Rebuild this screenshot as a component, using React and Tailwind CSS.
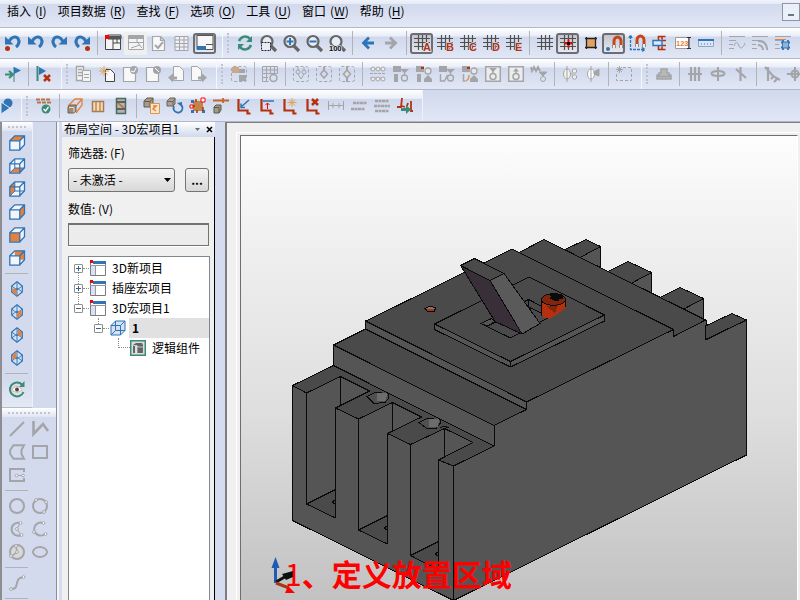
import clsx from "clsx";

const BLUE = "#2f74b5";
const RED = "#b5310e";
const GRAY = "#a3a5a8";
const DARK = "#4f4f4f";
const TEAL = "#3c8a78";
const ORANGE = "#e5813c";

function Glyph({ children }) {
  return (
    <svg className="h-4 w-4 overflow-visible" viewBox="0 0 16 16" fill="none" aria-hidden="true">
      {children}
    </svg>
  );
}

const undoArrow = (
  <g>
    <path d="M4 6.500C6.500 1.500 11 .8 13 3.500C14.800 6.500 14 9.500 11 12" stroke={BLUE} strokeWidth="3" />
    <path d="M0 1.500V9.500H8.500z" fill={BLUE} />
  </g>
);
const grid = (c) => <path d="M4.500 0v15M8.500 0v15M12.500 0v15M0 3.500h16M0 7.500h16M0 11.500h16" stroke={c} strokeWidth="1.200" />;
const page = (c) => <path d="M1.500 1.500h8l4 4v10h-12zM9.500 1.500v4h4" fill="#f8f8f8" stroke={c} strokeWidth="1.200" />;
const lens = (
  <g>
    <circle cx="7" cy="6.500" r="5.500" stroke="#666" strokeWidth="2.200" fill="#e8ecf6" />
    <path d="M11 11l5 5" stroke="#666" strokeWidth="3.200" />
  </g>
);
const magnet = (
  <g>
    <path d="M5 10V6a3.500 4 0 0 1 7 0v4" stroke="#c4481c" strokeWidth="3" />
    <path d="M5 10v3M12 10v3" stroke="#eee" strokeWidth="3" />
    <path d="M3.500 10v3M6.500 10v3M10.500 10v3M13.500 10v3" stroke="#777" strokeWidth="0.800" />
  </g>
);
const cubeWire = <path d="M.8 5.800h10v9.400h-10zM.8 5.800L5.800.8h9.700v9l-4.700 5M10.800 5.800l4.700-5" stroke={BLUE} strokeWidth="1.300" />;
const cubeInner = <path d="M5.800 1v9L1 14.800M5.800 10h9.500" stroke={BLUE} strokeWidth="1" />;
const diamond = (
  <g>
    <path d="M8 .8L13.300 5v6L8 15.300 2.700 11V5z" fill="#d5e0f3" stroke={BLUE} strokeWidth="1.200" />
    <path d="M8 1v14M2.700 5L8 9l5.300-4M2.700 11L8 7l5.300 4" stroke={BLUE} strokeWidth="0.900" />
  </g>
);
const dashedBox = <rect x="0.500" y="0.500" width="15" height="15" rx="2" stroke={GRAY} strokeDasharray="3 2" />;
const angle = <path d="M2.500 1v11.500h9v3h3" stroke={RED} strokeWidth="2.200" />;
const grayFilter = (
  <g fill={GRAY}>
    <path d="M0 0h8v6H0zM7 3h9l-4 4v2h-1V7z" />
    <circle cx="11.500" cy="12" r="3" fill="none" stroke={GRAY} strokeWidth="1.300" />
    <path d="M1 8h4v8H1z" />
  </g>
);
const graySwap = (
  <g fill={GRAY}>
    <path d="M0 0h8v6H0z" />
    <path d="M5 1h3v2H5z" fill={RED} />
    <circle cx="12" cy="5" r="3" fill="#e8e8e8" stroke={GRAY} strokeWidth="1.300" />
    <path d="M12 9l4 4v3H8v-3zM1 8h4v8H1z" />
  </g>
);
const waves = <path d="M0 1.500h16M0 5.500h7M0 9.500h4M0 13.500h5" stroke={GRAY} />;
const textMark = (t) => (
  <g>
    {grid(DARK)}
    <text x="9" y="16" fontSize="11" fontWeight="700" fontFamily="Liberation Sans" fill={RED} stroke="#dfe4f2" strokeWidth="1.500" paintOrder="stroke">{t}</text>
  </g>
);

const icons = {
  undoList: <g>{undoArrow}<circle cx="2.500" cy="13.500" r="2.500" fill={RED} /></g>,
  undo: undoArrow,
  redo: <g transform="matrix(-1 0 0 1 16 0)">{undoArrow}</g>,
  redoList: <g><g transform="matrix(-1 0 0 1 16 0)">{undoArrow}</g><circle cx="13.500" cy="13.500" r="2.500" fill={RED} /></g>,
  navigator: <g><path d="M.5 1.500h15v13H.5z" fill="#f4f4f4" stroke="#444" /><path d="M3 0h13v4H3zM8 4v4h8M8 8v7M12 4v4" stroke="#444" /><path d="M4 1h12v3H4z" fill="#555" /><path d="M0 0h4v4H0z" fill="red" /></g>,
  window: <g stroke={GRAY}><path d="M.5.500h15v14H.5z" fill="#f4f4f4" /><path d="M0 2.500h16" strokeWidth="3" /><path d="M1 7.500h14M9 4v4M3 13l9-3M10 8l4 5" /></g>,
  pageCheck: <g>{page(GRAY)}<path d="M4 10l3 3 5-6" stroke={GRAY} strokeWidth="2" /></g>,
  table: <path d="M1 1.500h13v14H1zM1 5h13M1 8.500h13M1 12h13M5.500 1v14M10 1v14" fill="#eef0f6" stroke={GRAY} />,
  preview: <g><path d="M0 .5h16v14H0z" fill="#f7f7f7" stroke="#555" /><path d="M0 11h9v4H0z" fill={BLUE} /><path d="M9 9.500h7" stroke="#555" /></g>,
  refresh: <g stroke={TEAL} strokeWidth="2.500"><path d="M2 6C4 1 10 0 13 4M14 10C12 15 6 16 3 12" /><path d="M15 1v6h-6zM1 15V9h6z" fill={TEAL} stroke="none" /></g>,
  zoomArea: <g>{lens}<path d="M1.500 7.500h9v8h-9z" stroke="#222" strokeDasharray="2 1" fill="#e8ecf6" /></g>,
  zoomIn: <g>{lens}<path d="M3.500 6.500h7M7 3v7" stroke={BLUE} strokeWidth="2" /></g>,
  zoomOut: <g>{lens}<path d="M3.500 6.500h7" stroke={BLUE} strokeWidth="2" /></g>,
  zoomFull: <g>{lens}<text x="0" y="16" fontSize="7.500" fontWeight="700" fontFamily="Liberation Sans" fill="#111" stroke="#e3e8f5" strokeWidth="1.500" paintOrder="stroke">100</text></g>,
  back: <path d="M14 8H4M9 2.500L3.500 8 9 13.500" stroke={BLUE} strokeWidth="2.800" />,
  forward: <path d="M2 8h10M7 2.500L12.500 8 7 13.500" stroke={GRAY} strokeWidth="2.800" />,
  gridA: textMark("A"),
  gridB: textMark("B"),
  gridC: textMark("C"),
  gridD: textMark("D"),
  gridE: textMark("E"),
  grid: grid(DARK),
  gridSnap: <g>{grid(DARK)}<path d="M8.500 4.500v8M4.500 8.500h8" stroke="red" strokeWidth="2" /><path d="M7 7h3v3H7z" fill="#111" /></g>,
  fill: <g><path d="M4 4h8v8H4z" fill="#e3a262" /><path d="M3.500 2v12M12.500 2v12M2 3.500h12M2 12.500h12" stroke="#222" strokeWidth="1.300" /></g>,
  magnet: <g><g transform="translate(3 0)">{magnet}</g><circle cx="2" cy="14" r="2" fill={BLUE} /></g>,
  magnetAxis: <g><g transform="translate(3 -1)">{magnet}</g><path d="M1.500 1v13.500H16M0 3l1.500-3 1.500 3M13 12.500l3 2-3 2" stroke={BLUE} strokeWidth="1.300" strokeDasharray="3 1" /></g>,
  component: <g><path d="M13.500 1.500H6.500v13h7M10 4.500V1M10 11.500v3M10 5.500h4M10 10.500h4" stroke={RED} strokeWidth="1.600" /><path d="M1 5.500h9v5H1z" fill="#dde8f8" stroke={BLUE} strokeWidth="1.400" /></g>,
  number: <g><path d="M.5 2.500h13v11H.5z" fill="#fff" stroke="#999" /><text x="1" y="11" fontSize="7.500" fontWeight="700" fontFamily="Liberation Sans" fill={ORANGE}>123</text><path d="M12 2.500h4M14 2.500v11M12 13.500h4" stroke="#333" /></g>,
  ruler: <g><path d="M.5 4.500h15v7H.5z" fill="#dce6f6" stroke="#8fa6c4" /><path d="M0 5h16" stroke={BLUE} strokeWidth="2" /><path d="M3 9h11" stroke={BLUE} strokeDasharray="1 2" /></g>,
  waveA: <g>{waves}<path d="M5 11c2-6 4-3 5 0s4 3 6-3" stroke={GRAY} /></g>,
  waveB: <g>{waves}<path d="M6 6a8 8 0 0 1 9 9M6 10a5 5 0 0 1 5 5" stroke={GRAY} strokeWidth="2" /></g>,
  waveC: <g>{waves}<path d="M0 4.500h11" stroke={ORANGE} /><path d="M6 7.500h9M6 12.500h9M8 5v10M13 5v10" stroke={BLUE} strokeWidth="1.800" /><path d="M8 7.500h5v5H8z" fill="#8fb4dc" /></g>,

  insertFlag: <g><path d="M0 8.500h8M4 5l4 3.500L4 12" stroke={TEAL} strokeWidth="2.200" /><path d="M9 1v15" stroke={TEAL} /><path d="M9 1l7 3.500L9 8z" fill={BLUE} /></g>,
  deleteFlag: <g><path d="M1.500 0v15" stroke={TEAL} strokeWidth="2" /><path d="M3 1l7 4-7 4z" fill={BLUE} /><path d="M8 9l6 6M14 9l-6 6" stroke={RED} strokeWidth="2.500" /></g>,
  pages: <g stroke={GRAY} fill="#f4f4f4"><path d="M.5.500h7v14h-7zM2 3.500h4M2 6.500h4M2 9.500h4" strokeWidth="1.400" /><path d="M6.500 4.500h8v11h-8zM8 8.500h5M8 11.500h5" /></g>,
  newPage: <g><path d="M6.500 3.500h5l4 4v8h-9z" fill="#f8f8f8" stroke="#444" /><path d="M5 0v10M0 5h10M1.500 1.500l7 7M8.500 1.500l-7 7" stroke="#e2a25a" /></g>,
  pageIn: <g>{page(GRAY)}<circle cx="12" cy="4" r="4" fill={GRAY} /><path d="M9 5l3 1 2-4" stroke="#fff" /></g>,
  pageOut: <g>{page(GRAY)}<circle cx="12" cy="4" r="4" fill={GRAY} /><path d="M10 2l4 4" stroke="#fff" /></g>,
  pagePrev: <g><path d="M5.500.500h6l4 4v10h-10z" fill="#f8f8f8" stroke={GRAY} /><path d="M0 11.500l5-4v3h4v3H5v3z" fill={GRAY} /></g>,
  pageNext: <g><path d="M.5.500h6l4 4v10h-10z" fill="#f8f8f8" stroke={GRAY} /><path d="M16 11.500l-5-4v3H7v3h4v3z" fill={GRAY} /></g>,
  macroBox: <g>{dashedBox}<path d="M1 1h7v6H1z" fill="#c9a987" /><path d="M8 3h6v4H8zM8 9h7v6H8z" fill={GRAY} /></g>,
  macroGrid: <g stroke={GRAY}><path d="M.5.500h15v7H.5zM.5 8v7.500h6M4.500 0v16M8.500 0v8M12.500 0v8M0 4h16M0 11.500h6" /><circle cx="11.500" cy="12" r="3.500" strokeWidth="1.500" /></g>,
  deviceA: <g>{dashedBox}<circle cx="5" cy="6" r="2" stroke={GRAY} /><circle cx="11" cy="6" r="2" stroke={GRAY} /><path d="M5 1v3M11 1v3M5 8l3 5 3-5" stroke={GRAY} /></g>,
  deviceB: <g>{dashedBox}<path d="M8 1v3" stroke={GRAY} strokeWidth="2" /><path d="M8 4l3.500 4L8 12 4.500 8z" stroke={GRAY} strokeWidth="1.500" /></g>,
  deviceC: <g>{dashedBox}<path d="M8 0v16" stroke={GRAY} strokeWidth="2" /><path d="M8 4l3.500 4L8 12 4.500 8z" fill="#ddd" stroke={GRAY} strokeWidth="1.500" /></g>,
  chain: (
    <g stroke={GRAY}>
      <path d="M0 3h16M0 7.500h16M0 12h16" strokeDasharray="3 1" />
      {[3, 8, 13].map((x) => (
        <g key={x} fill="#eee">
          <circle cx={x} cy="3" r="2" />
          <circle cx={x} cy="13" r="2" />
        </g>
      ))}
    </g>
  ),
  filterA: grayFilter,
  swapA: graySwap,
  filterB: <g>{grayFilter}<path d="M0 7h6v9H0z" fill="#dde2f0" /><path d="M1.500 8v7h4l3-6" stroke={GRAY} strokeWidth="1.500" /></g>,
  swapB: <g>{graySwap}<path d="M0 7h7v9H0z" fill="#dde2f0" /><path d="M1.500 8v7h2" stroke={GRAY} strokeWidth="1.500" /><path d="M4 15c2-1 3-3 3-6" stroke="#dc9a62" strokeWidth="1.500" /></g>,
  boxDown: <g stroke={GRAY} strokeWidth="1.500"><path d="M.7.700h14.600v14.600H.7z" fill="#ececec" /><circle cx="8" cy="10.500" r="3" /><path d="M4 2h8L8 6z" fill={GRAY} stroke="none" /><path d="M8 4v4" /></g>,
  boxUp: <g stroke={GRAY} strokeWidth="1.500"><path d="M.7.700h14.600v14.600H.7z" fill="#ececec" /><circle cx="8" cy="10.500" r="3" /><path d="M5 5.500h6L8 2z" fill={GRAY} stroke="none" /><path d="M8 4v4" /></g>,
  spring: <g stroke={GRAY}><path d="M0 1l1 4 2-4 2 4 2-4 2 4" strokeWidth="1.800" /><path d="M8 6h8l-4 4z" fill={GRAY} /><circle cx="12" cy="13" r="2.500" /></g>,
  plugA: <g stroke={GRAY}><ellipse cx="5" cy="8" rx="3.500" ry="5" fill="#f4f2ea" /><path d="M5 0v16M8 8h3" /><circle cx="12.500" cy="5" r="2.200" fill="#eee" /><circle cx="12.500" cy="11" r="2.200" fill="#eee" /></g>,
  plugB: <g stroke={GRAY}><ellipse cx="6" cy="8" rx="3.500" ry="5" fill="#fff" /><path d="M6 0v16" /><path d="M9 6l5-3v7L9 8z" fill={GRAY} /></g>,
  boxStar: <g stroke={GRAY}><path d="M7 1.500h8.500v13H.5V8" strokeDasharray="3 2" /><path d="M3.500 0v7M0 3.500h7M1 1l5 5M6 1L1 6" /></g>,
  base: <path d="M5 3h6v4h2v2h2v4H1V9h2V7h2zM1 10.500h14" fill="#b8b8b8" stroke={GRAY} strokeWidth="1.500" />,
  bars: <path d="M4 1v14M8 1v14M12 1v14M1 8h14" stroke={GRAY} strokeWidth="2.200" />,
  node: <g stroke={GRAY} strokeWidth="2"><path d="M8 1v14" /><ellipse cx="8" cy="7.500" rx="6.500" ry="2.500" /></g>,
  slash: <path d="M7.500 1v14M3 3l10 9" stroke={GRAY} strokeWidth="2.200" />,
  tee: <path d="M4 1v14M1 1l8 9 7 4M7 13l3-3M10 16l3-3" stroke={GRAY} strokeWidth="2.200" />,
  target: <g stroke={GRAY} strokeWidth="2"><circle cx="8" cy="8" r="3.500" /><path d="M8 1v14M0 8h16" /></g>,

  globe: <g><circle cx="12" cy="5" r="4.500" fill={BLUE} /><path d="M5 4v12l9-6z" fill={BLUE} stroke="#e0e6f3" /></g>,
  rackCheck: <g><path d="M0 1.500h15M1 4.500h14" stroke="#b5744c" strokeWidth="2" strokeDasharray="4 1" /><circle cx="10" cy="11" r="4.500" fill={TEAL} /><path d="M7.500 11l2 2 3-4" stroke="#fff" strokeWidth="1.300" /></g>,
  cubeOrange: <g><path d="M1 8l7-7h7v6l-6 8M15 1L9 8" stroke={ORANGE} strokeWidth="1.300" /><path d="M1 9l2-2h6v6l-2 2H1z" fill="#a08b74" stroke="#6c6255" /><path d="M2 9.500h5v5" stroke="#ddd" /></g>,
  rail: <g><path d="M2.500 3.500h11v10h-11z" fill="#f2dfae" stroke="#aa785c" strokeWidth="1.500" /><path d="M6 4v9M10 4v9" stroke="#c0885b" strokeWidth="1.500" /></g>,
  cabinet: <g><path d="M3.500.500h9v15h-9z" fill="#b0b5b0" stroke="#4a6a60" strokeWidth="1.500" /><path d="M4 4h8M4 11h8" stroke="#444" strokeWidth="1.500" /><path d="M5 5l6 5" stroke="#e05a24" strokeWidth="1.500" /></g>,
  copyCube: <g><path d="M0 3l3-3h6v6L6 9H0z" fill="#a79b8a" stroke="#62594c" /><path d="M.5 3.500H6V9M6 3.500L9 .5" stroke="#62594c" /><path d="M6.500 5.500h9v10h-9z" fill="#f7e7cf" stroke="#dd964f" /><path d="M9 8h3l-3 3 3 2" stroke={ORANGE} strokeWidth="1.500" /></g>,
  rotateCube: <g><path d="M0 3l3-3h5v6L6 8H0z" fill="#aaa396" stroke="#6a6358" /><path d="M.5 3.500H6V8M6 3.500L8 .5" stroke="#6a6358" /><path d="M7 8a4.500 4.500 0 1 0 6-2" stroke={BLUE} strokeWidth="1.800" /><path d="M10 5l5-1v5z" fill={BLUE} /></g>,
  scatter: <g><path d="M3 3h10v10H3z" fill="#c18449" /><path d="M1 2h3v3H1zM1 12h3v3H1zM12 12h3v3h-3z" fill={BLUE} /><path d="M1 8h4M6 1v3M13 9v4M7 12v3" stroke={RED} strokeWidth="1.500" /><path d="M11 0h4v4h-4zM0 7h3v3H0z" fill="#fff" stroke="red" /></g>,
  moveCube: <g><path d="M0 2.500h16M10 0v5" stroke="#c9652b" strokeWidth="1.800" /><path d="M1 9l2-2h5v5l-2 3H1z" fill="#a09b86" stroke="#5c5b4c" /><path d="M1 9.500h5V15" stroke="#5c5b4c" /></g>,
  angleA: <g>{angle}<path d="M5 9l8-7M9 9.500H5v-4" stroke={BLUE} strokeWidth="1.500" /></g>,
  angleB: <g>{angle}<path d="M4 3h11" stroke={BLUE} strokeWidth="1.500" /><path d="M8.500 5v6M6.500 7l2-2 2 2" stroke="red" /></g>,
  angleStar: <g>{angle}<path d="M10 0v9M5.500 4.500h9M7 1.500l6 6M13 1.500l-6 6" stroke="#e3a05b" /></g>,
  angleX: <g>{angle}<path d="M7 1l6 6M13 1L7 7" stroke={RED} strokeWidth="2.500" /></g>,
  measure: <path d="M.5 3v9M15.500 3v9M1 7.500h14M5 5v5M11 5v5" stroke={GRAY} />,
  linesA: <path d="M2 5h14M0 11h14" stroke={GRAY} strokeWidth="2.500" strokeDasharray="3 .5" />,
  linesB: <path d="M1 3h14M0 8h16M1 13h14" stroke={GRAY} strokeWidth="2.300" strokeDasharray="3 .5" />,
  route: <g><path d="M5 0L4 9H0M5 8l3 1M14 3v10h2M11 5l-1 3" stroke={RED} strokeWidth="1.800" /><path d="M4 10h5V7l5 4.500L9 16v-3H4z" fill={TEAL} /></g>,

  cubeTop: <g><path d="M1 5.800h10v9H1zM11 5.800l4.500-5v9l-4.700 5" fill="#f2f5fb" /><path d="M1 5.800L5.800.8h9.700l-5 5z" fill={ORANGE} />{cubeWire}</g>,
  cubeBottom: <g><path d="M1 5.800L5.800.8h9.700v9l-5 5H1z" fill="#f2f5fb" /><path d="M1 14.800L5.800 10h9.700l-5 4.800z" fill={ORANGE} />{cubeWire}{cubeInner}</g>,
  cubeLeft: <g><path d="M1 5.800L5.800.8h9.700v9l-5 5H1z" fill="#f2f5fb" /><path d="M1 5.800l4.800-5V10L1 14.800z" fill={ORANGE} />{cubeWire}{cubeInner}</g>,
  cubeRight: <g><path d="M1 5.800L5.800.8h9.700l-5 5v9H1z" fill="#f2f5fb" /><path d="M10.800 5.800l4.700-5v9l-4.700 5z" fill={ORANGE} />{cubeWire}</g>,
  cubeFront: <g><path d="M1 5.800L5.800.8h9.700v9l-5 5z" fill="#f2f5fb" /><path d="M1 5.800h10v9H1z" fill={ORANGE} />{cubeWire}</g>,
  cubeBack: <g><path d="M1 5.800L5.800.8h9.700v9l-5 5H1z" fill="#f2f5fb" /><path d="M5.800.8h9.700v9h-4.700v-4h-5z" fill={ORANGE} />{cubeWire}</g>,
  isoSW: <g>{diamond}<path d="M3.300 7L8 9.500v5l-4.700-3.800z" fill={ORANGE} /></g>,
  isoSE: <g>{diamond}<path d="M12.700 6L8 9.500v5l4.700-3.800z" fill={ORANGE} /></g>,
  isoNE: <g>{diamond}<path d="M8.500 2l4.200 3.500V10L8.500 7z" fill={ORANGE} /></g>,
  isoNW: <g>{diamond}<path d="M7.500 2L3.300 5.500V10l4.200-3z" fill={ORANGE} /></g>,
  orbit: <g><path d="M13 3.500A7 7 0 1 0 14.500 11" stroke={TEAL} strokeWidth="2" /><path d="M15.500 0v6H10z" fill={TEAL} /><path d="M3 8.500c3-4 7-4 10 0-3 3.500-7 3.500-10 0z" fill="#fff" stroke="#dba867" /><circle cx="8" cy="8.500" r="2" fill="#36495f" /></g>,

  line: <path d="M1 15L15 1" stroke={GRAY} strokeWidth="2.200" />,
  polyline: <path d="M1.500 0v13L11 3l5 7" stroke={GRAY} strokeWidth="2.600" />,
  polygon: <path d="M4.500 1.200H15L12.500 6v4l2.500 4.800H4.500L1.200 10V6z" stroke={GRAY} strokeWidth="2" />,
  rect: <path d="M1 2h14v12H1z" stroke={GRAY} strokeWidth="2" />,
  rectCenter: <g stroke={GRAY}><path d="M15 5V2H1v12h14v-3" strokeWidth="2" /><path d="M8 8.500h6" /><circle cx="7.500" cy="8.500" r="1.300" fill="#fff" /><circle cx="14" cy="8.500" r="1.300" fill="#fff" /></g>,
  circle: <circle cx="8" cy="8" r="7" stroke={GRAY} strokeWidth="2" />,
  circle3: <g stroke={GRAY}><circle cx="8" cy="8" r="7" strokeWidth="2" /><circle cx="4" cy="2" r="1.400" fill="#fff" /><circle cx="14" cy="4" r="1.400" fill="#fff" /><circle cx="12" cy="14" r="1.400" fill="#fff" /></g>,
  arcCenter: <g stroke={GRAY}><path d="M11 2a6.500 6.500 0 1 0 1 12" strokeWidth="2" /><path d="M11 2L8 8l4 6" /><circle cx="11.500" cy="2" r="1.400" fill="#fff" /><circle cx="8" cy="8" r="1.400" fill="#fff" /><circle cx="12.500" cy="14" r="1.400" fill="#fff" /></g>,
  arc: <g stroke={GRAY}><path d="M11 2a6.500 6.500 0 1 0 2 11" strokeWidth="2" /><circle cx="11.500" cy="2" r="1.400" fill="#fff" /><circle cx="2" cy="11" r="1.400" fill="#fff" /><circle cx="13.500" cy="13" r="1.400" fill="#fff" /></g>,
  sector: <g stroke={GRAY}><circle cx="8" cy="8" r="7" strokeWidth="2" fill="#d9d9d9" /><path d="M7 2l1 6-5 4" strokeWidth="1.600" /><circle cx="7" cy="2" r="1.400" fill="#fff" /><circle cx="8" cy="8" r="1.400" fill="#fff" /><circle cx="2" cy="12" r="1.400" fill="#fff" /></g>,
  ellipse: <ellipse cx="8" cy="8" rx="7" ry="5" stroke={GRAY} strokeWidth="2" />,
  spline: <g stroke={GRAY}><path d="M2 14c6 0 5-3 6-6s1-5 6-6" strokeWidth="2" /><circle cx="14.500" cy="2" r="1.400" fill="#fff" /><circle cx="2" cy="14" r="1.400" fill="#fff" /></g>,
};

const menus = [
  ["插入", "I"],
  ["项目数据", "R"],
  ["查找", "F"],
  ["选项", "O"],
  ["工具", "U"],
  ["窗口", "W"],
  ["帮助", "H"],
];

// "|" is a separator, ":" starts a new toolbar with its own grip
const rowOne = "undoList undo redo redoList | navigator window pageCheck table preview : refresh zoomArea zoomIn zoomOut zoomFull | back forward | gridA gridB gridC gridD gridE | grid gridSnap fill magnet magnetAxis component number ruler | waveA waveB waveC".split(" ");
const rowTwo = "insertFlag | deleteFlag : pages newPage pageIn pageOut pagePrev pageNext : macroBox | macroGrid | deviceA deviceB deviceC | chain filterA swapA filterB swapB boxDown boxUp spring | plugA plugB | boxStar : base | bars node slash | tee target".split(" ");
const rowThree = "globe : rackCheck | cubeOrange rail cabinet | copyCube rotateCube scatter moveCube angleA angleB angleStar angleX measure linesA linesB route".split(" ");
const viewTools = "cubeTop cubeBottom cubeLeft cubeRight cubeFront cubeBack | isoSW isoSE isoNE isoNW | orbit".split(" ");
const drawTools = [
  ["line", "polyline", "polygon", "rect", "rectCenter"],
  ["circle", "circle3", "arcCenter", "arc", "sector", "ellipse"],
  ["spline"],
];
const pressed = ["preview", "gridA", "gridSnap", "magnet"];

function ToolButton({ name }) {
  const on = pressed.includes(name);
  return (
    <button
      type="button"
      aria-label={name}
      aria-pressed={on}
      className={clsx(
        "grid w-[23px] shrink-0 place-items-center",
        on ? "h-[21px] rounded-[3px] border-2 border-[#6b6d73] bg-gradient-to-b from-[#c3c6cf] to-[#e6e9f2]" : "h-[23px]",
        name === "window" && "bg-[#efeff0]"
      )}
    >
      <Glyph>{icons[name]}</Glyph>
    </button>
  );
}

function Toolbar({ items, className }) {
  return (
    <div
      role="toolbar"
      className={clsx(
        "flex h-[31px] shrink-0 items-center overflow-hidden border-[#b2b8ca] bg-[linear-gradient(#ffffff,#e9edf7_27%,#d0d8ec_30%,#e1e7f5)]",
        className
      )}
    >
      {items.map((item, i) => {
        if (item === "|") {
          return <span key={i} className="flex h-6 w-2 shrink-0 justify-center"><span className="w-px bg-[#b3b3b7]" /></span>;
        }
        if (item === ":") {
          return (
            <span key={i} className="flex h-full w-[17px] shrink-0 items-center gap-1 pl-1.5">
              <span className="h-full w-px bg-[#f5f7fc]" />
              <span className="h-5 border-l-2 border-dotted border-[#bfc3cd]" />
            </span>
          );
        }
        return <ToolButton key={i} name={item} />;
      })}
    </div>
  );
}

function RailGrip({ wide }) {
  return (
    <div className="flex h-[9px] items-center bg-gradient-to-b from-white to-[#e0e5f3] px-1.5">
      <span className={clsx("border-t-2 border-dotted border-[#c0c4cf]", wide ? "w-11" : "w-5")} />
    </div>
  );
}

function Rail() {
  return (
    <aside className="flex w-[57px] shrink-0 flex-col overflow-hidden border-r border-l-2 border-[#8e8e92] bg-[#d3daed]">
      <div className="h-[286px] w-[31px] shrink-0 border-r border-b border-[#b7bccb] border-r-[#eef1f9] bg-gradient-to-b from-[#d3daed] from-90% to-[#e4e9f5]">
        <RailGrip />
        <div className="flex flex-col pl-[3px]">
          {viewTools.map((t, i) =>
            t === "|" ? <span key={i} className="flex h-2 w-[23px] items-center"><span className="h-px w-full bg-[#b3b3b7]" /></span> : <ToolButton key={i} name={t} />
          )}
        </div>
      </div>
      <div>
        <RailGrip wide />
        {drawTools.map((group, i) => (
          <div key={i} className="pl-[3px]">
            <div className="flex flex-wrap">
              {group.map((t) => <ToolButton key={t} name={t} />)}
            </div>
            <span className="flex h-2 w-[23px] items-center"><span className="h-px w-full bg-[#b3b3b7]" /></span>
          </div>
        ))}
      </div>
    </aside>
  );
}

function Expander({ open, label }) {
  return (
    <button type="button" aria-label={label} aria-expanded={open} className="z-10 grid h-[9px] w-[9px] shrink-0 place-items-center rounded-[1px] border border-[#8f8f8f] bg-white">
      <svg className="h-[5px] w-[5px]" viewBox="0 0 5 5" aria-hidden="true">
        <path d={open ? "M0 2.500h5" : "M0 2.500h5M2.500 0v5"} stroke="#33648f" />
      </svg>
    </button>
  );
}

function Dots() {
  return <span className="w-1.5 shrink-0 border-t border-dotted border-[#8d8d8d]" />;
}

function ProjectIcon() {
  return (
    <svg className="mx-px h-4 w-4 shrink-0" viewBox="0 0 16 16" aria-hidden="true">
      <path d="M.5 1.500h15v14H.5z" fill="#fff" stroke="#7b7b7b" />
      <path d="M1 5h4v10H1z" fill="#d8e2f6" />
      <path d="M3 1h13v3H3z" fill={BLUE} />
      <path d="M0 5.500h16M5.500 5v10" stroke="#999" />
      <path d="M0 0h3v3H0z" fill="red" />
    </svg>
  );
}

function ProjectTree() {
  return (
    <ul role="tree" className="mr-1 ml-1.5 mt-[10px] flex-1 border border-b-0 border-[#7f8790] bg-white pt-px pl-[5px]">
      {["3D新项目", "插座宏项目", "3D宏项目1"].map((name, i) => (
        <li key={name} role="treeitem" className="relative flex h-5 items-center">
          {i < 2 && <span className="absolute top-3.5 left-1 h-3 border-l border-dotted border-[#8d8d8d]" />}
          <Expander open={i === 2} label={name} />
          <Dots />
          <ProjectIcon />
          <span className="ml-[5px] whitespace-nowrap">{name}</span>
        </li>
      ))}
      <li role="treeitem" className="relative flex h-5 items-center pl-5">
        <span className="absolute top-0 left-6 h-1.5 border-l border-dotted border-[#8d8d8d]" />
        <Expander open label="1" />
        <Dots />
        <svg className="mx-px h-4 w-4 shrink-0" viewBox="0 0 16 16" aria-hidden="true">
          <path d="M1 5.500L5.500 1H15v9.500L10.500 15H1z" fill="#d4e1f6" stroke={BLUE} />
          <path d="M1 5.500h9.500V15M10.500 5.500L15 1M5.500 1v9.500H15M5.500 10.500L1 15" fill="none" stroke={BLUE} />
        </svg>
        <span className="ml-0.5 flex-1 bg-[#e1e1e1] pl-[3px] font-bold leading-5">1</span>
      </li>
      <li role="treeitem" className="flex h-5 items-center pl-11">
        <span className="h-2.5 w-3 shrink-0 -translate-y-1/2 border-b border-l border-dotted border-[#8d8d8d]" />
        <svg className="h-4 w-4 shrink-0" viewBox="0 0 16 16" aria-hidden="true">
          <path d="M.7.700h14.600v14.600H.7z" fill="#d9dedb" stroke={TEAL} strokeWidth="1.500" />
          <path d="M3 5l3-2h6l1 2v8H7V6H5v7H3z" fill="#656565" />
          <path d="M3 5.500h4l1 1.500h5M7 6v7" fill="none" stroke="#eee" strokeWidth="0.700" />
        </svg>
        <span className="ml-[6px] whitespace-nowrap">逻辑组件</span>
      </li>
    </ul>
  );
}

function LayoutPanel() {
  return (
    <section className="flex w-[168px] shrink-0 flex-col bg-[#d5dcef] pl-[5px] shadow-[inset_2px_0_#f3f5fb]">
      <header className="flex h-[15px] w-[153px] items-center bg-gradient-to-b from-white to-[#d0d8ec] pb-px pl-0.5">
        <h2 className="flex-1 leading-3 whitespace-nowrap">布局空间 - 3D宏项目1</h2>
        <button type="button" aria-label="菜单" className="mr-1.5">
          <svg className="h-[3px] w-[5px]" viewBox="0 0 5 3" aria-hidden="true"><path d="M0 0h5L2.500 3z" fill="#6b6f7a" /></svg>
        </button>
        <button type="button" aria-label="关闭" className="mr-0.5">
          <svg className="h-[7px] w-[7px]" viewBox="0 0 7 7" aria-hidden="true"><path d="M1 1l5 5M6 1L1 6" stroke="#000" strokeWidth="1.600" /></svg>
        </button>
      </header>
      <div className="flex w-[153px] flex-1 flex-col border-r border-black bg-[#f0f0f0]">
        <label htmlFor="filter" className="mt-[6px] ml-1.5 leading-5">筛选器: (F)</label>
        <div className="mt-[5px] ml-1.5 flex gap-2.5">
          <div className="relative">
            <select id="filter" className="h-6 w-[107px] appearance-none rounded-[3px] border border-[#73766f] bg-gradient-to-b from-[#f4f4f4] to-[#d8d8d8] pl-1 leading-5">
              <option>- 未激活 -</option>
            </select>
            <svg className="pointer-events-none absolute top-2.5 right-1 h-1 w-[7px]" viewBox="0 0 7 4" aria-hidden="true"><path d="M0 0h7L3.500 4z" fill="#000" /></svg>
          </div>
          <button type="button" aria-label="选择筛选器" className="h-6 w-6 rounded-[3px] border border-[#73766f] bg-gradient-to-b from-[#f4f4f4] to-[#d8d8d8] font-bold leading-4">...</button>
        </div>
        <label htmlFor="value" className="mt-[7px] ml-1.5 leading-5">数值: (V)</label>
        <input id="value" className="mr-[5px] ml-1.5 mt-1 h-[23px] border border-t-2 border-[#72756f] bg-[#ececec] px-1 shadow-[0_1px_#fff]" />
        <ProjectTree />
      </div>
    </section>
  );
}

function Breaker() {
  return (
    <svg className="h-[464px] w-[556px] shrink-0" viewBox="241 136 556 464" stroke="#0a0a0a" strokeLinejoin="round" shapeRendering="crispEdges" aria-label="3D宏项目1">
      {/* body */}
      <path d="M292.500 520.500V385.500L333.500 365.500V345L366 329V321L512 249 519 252.500 544 239.500 706 320V340L746.500 320V455L453.500 600.500z" fill="#555" />
      {/* rear terminals */}
      <g fill="#4a4a4a">
        <path d="M565 249.500L586 239.500 600.500 246.500 580 257.500zM608 271.500L628 261.500 651.500 272.500 631 283.500zM660 297.500L680 287.500 703.500 298.500 683 309.500zM705.500 326L732 313.500 746.500 320 705.500 339.500z" />
        <path d="M580 257.500L600.500 246.500V267.500zM631 283.500L651.500 272.500V292.500zM683 309.500L703.500 298.500V319.500z" fill="#555" />
      </g>
      {/* cover steps */}
      <g fill="#4a4a4a">
        <path d="M519 252.500L544 239.500 705.500 320 673.500 336.500V329.500z" />
        <path d="M366 321L512 249 673.500 329.500 526.500 402z" />
        <path d="M365.500 321V329L526.500 409.500V402z" fill="#555" />
        <path d="M333.500 345L365.500 329 526.500 409.500 494 425.500z" />
        <path d="M333.500 345V365.500L494 446V425.500z" fill="#555" />
        <path d="M292.500 385.500L333.500 365.500 494 446 453.500 466 438.500 460 473 442.500 444.500 428.500 410.500 444.500 387.500 433.500 421.500 417 392.500 402.500 358.500 419 335.500 408 369.500 391 340.500 376.500 306.500 393z" />
      </g>
      {/* front slots */}
      <g fill="#4a4a4a">
        <path d="M306.500 504L335.500 489.500V518zM358.500 530L387.500 515.500V544zM410.500 555.500L438.500 541.500V570z" />
        <path d="M335 500l-3 2 3 2M387 526l-3 2 3 2M438 552l-3 2 3 2" fill="none" />
      </g>
      <path d="M306.500 393V504M335.500 408V518M340.500 376.500V405.500M358.500 419V530M387.500 433.500V544M392.500 402.500V431M410.500 444.500V555.500M438.500 460V570M444.500 428.500V457M453.500 466V600" />
      <g fill="#505050">
        <path d="M367 396.500l8-4 13 1 1 4-4 5-11 1zM419 422.500l8-4 13 1 0 4-4 5-9 0zM440 428l4-2 5 2" />
        <path d="M377 393h10l-1 8h-9zM429 419h10l-1 8h-9z" fill="#6c6c6c" stroke="none" />
      </g>
      {/* lever plate */}
      <g fill="#4a4a4a">
        <path d="M434.500 324L529 277 604.500 315V321L510.500 367 434.500 329.500z" fill="#555" />
        <path d="M434.500 324L529 277 604.500 315 510.500 361.500zM510.500 361.500V367" />
        <path d="M481 323.500L528.500 299.500 556 313.500 510.500 338z" />
        <path d="M487.500 326L496 322 522 333M528.500 299.500V307L546 315.500" fill="none" />
        <path d="M481 323.500L491.500 318.500 495 321.500 487.500 326z" fill="#555" />
      </g>
      {/* lever */}
      <path d="M460.500 265.500L474.500 258.500 504 273.500 490 280.500z" fill="#4a4a4a" />
      <path d="M460.500 265.500L490 280.500 522 334 495 321.500 464 271z" fill="#382f38" />
      <path d="M490 280.500L504 273.500 540 323.500 522 334z" fill="#5a5a5a" />
      {/* test button */}
      <path d="M541.500 298.500L549 294.500H561L565.500 300V308L556 315 549 319 541.500 316z" fill="#b5310e" stroke="none" />
      <path d="M541.500 300C542 292 565 291 565.500 300C563 307 544 307 541.500 300zM541.500 300V316M565.500 300V307" fill="#83250c" />
      <path d="M550 298l2-2-2-1 8-1 4 1 1 3-5 1 0 2-4-1z" fill="#0a0a0a" />
      <path d="M546 306l9 7 3-7z" fill="#83250c" stroke="none" />
      <path d="M425 308.500l4-2 7 1-2 4-6 0z" fill="#777" />
      <path d="M427 310h7" stroke="#b5310e" strokeWidth="2" />
      {/* axes */}
      <g strokeWidth="3" shapeRendering="auto">
        <path d="M275.500 583v-18" stroke="#1d5bb5" />
        <path d="M275.500 557l4 11h-8z" fill="#1d5bb5" stroke="none" />
        <path d="M276 582l12-7" stroke="#111" />
        <path d="M282 574l11-3v6l-7 3z" fill="#0b120b" stroke="none" />
        <path d="M276 583l13 5" stroke="#a5381a" />
        <path d="M288 586l7 7h-10z" fill="red" stroke="none" />
      </g>
    </svg>
  );
}

function Viewport() {
  return (
    <main className="flex min-w-0 flex-1 border-t border-l-2 border-[#7d7d80] bg-[#f0f0f0] pt-[12px] pr-0.5 pl-[13px] shadow-[inset_9px_9px_#f0f0f0,inset_10px_10px_#fff]">
      <div className="relative flex min-w-0 flex-1 overflow-hidden border border-b-0 border-[#6e6e6e] border-r-white bg-[linear-gradient(#fdfdfd,#f0f0f0_22%,#dddedd_60%,#c2c2c2)]">
        <Breaker />
        <p className="absolute bottom-0.5 left-11 text-[30px] leading-[50px] whitespace-nowrap text-[#ff0000]">
          1<span className="font-bold">、定义放置区域</span>
        </p>
      </div>
    </main>
  );
}

export default function App() {
  return (
    <div className="flex h-screen flex-col overflow-hidden bg-[#d5dcef] font-['Noto_Sans_CJK_SC','Liberation_Sans',sans-serif] text-xs text-black">
      <nav className="flex h-7 shrink-0 items-start justify-between border-b border-[#b2b8ca] bg-[linear-gradient(#f0f3fa,#e6eaf5_14%,#d1d9ed_16%,#e3e8f6)] pl-[7px]">
        <div className="flex gap-[11px]">
          {menus.map(([name, key]) => (
            <button key={key} type="button" className="flex gap-1 leading-[22px] whitespace-nowrap">
              {name} <span>(<u className="underline-offset-2">{key}</u>)</span>
            </button>
          ))}
        </div>
        <button type="button" aria-label="最小化" className="mt-[3px] flex h-[18px] w-[18px] items-end justify-center border border-[#8f969f] bg-[#e9f0fa] pb-1">
          <span className="h-0.5 w-1.5 bg-[#6b7682]" />
        </button>
      </nav>
      <Toolbar items={rowOne} className="border-b pl-px" />
      <Toolbar items={rowTwo} className="border-b pl-px" />
      <div className="flex shrink-0 border-b border-[#b2b8ca] bg-gradient-to-b from-[#d0d8ec] to-[#e1e7f5]">
        <div className="w-[423px] overflow-hidden border-r border-[#eef1f9]">
          <Toolbar items={rowThree} className="-ml-2" />
        </div>
      </div>
      <div className="flex min-h-0 flex-1">
        <Rail />
        <LayoutPanel />
        <Viewport />
      </div>
    </div>
  );
}
